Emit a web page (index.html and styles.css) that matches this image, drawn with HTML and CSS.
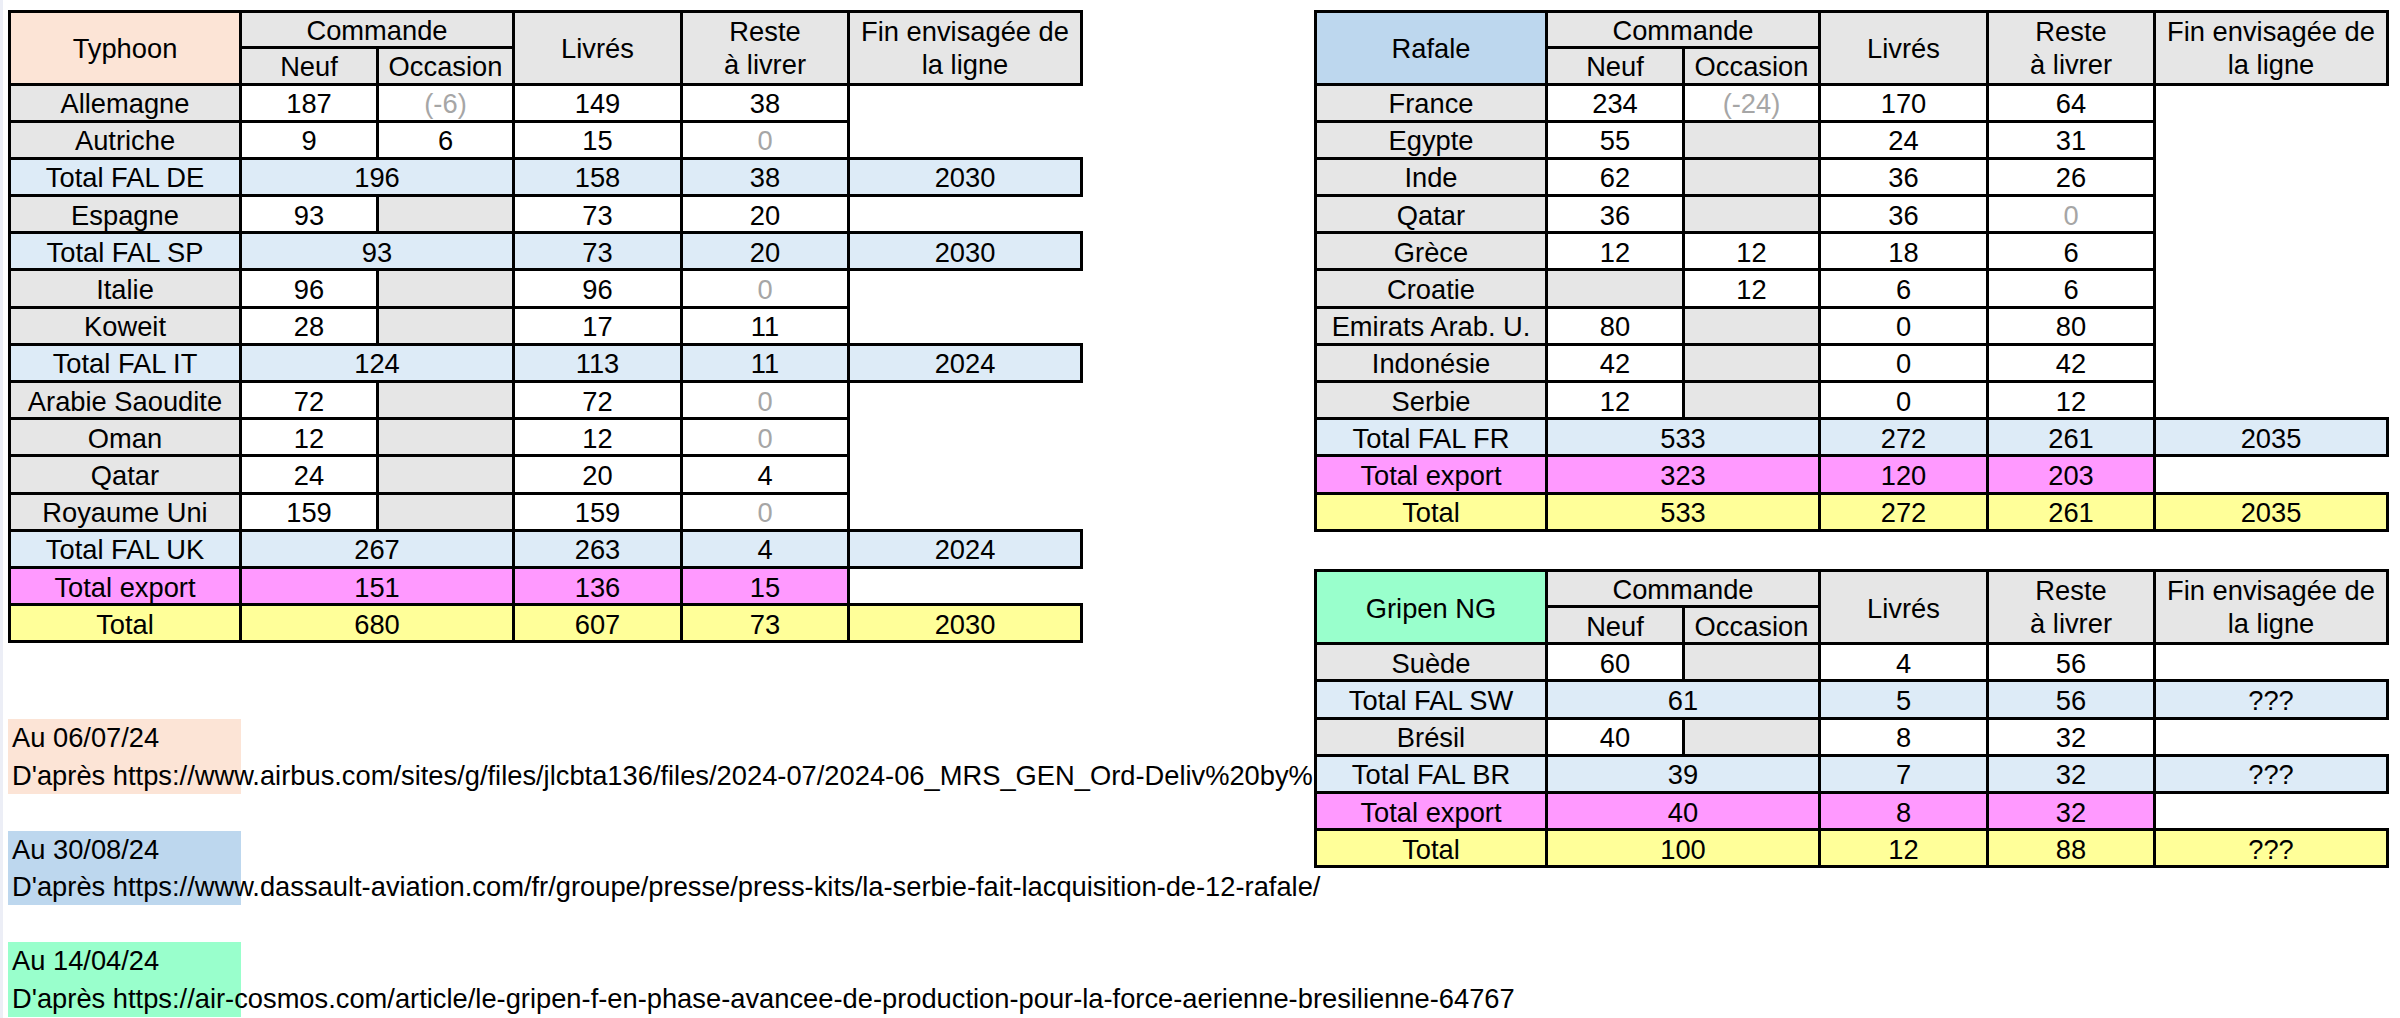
FILE: index.html
```html
<!DOCTYPE html>
<html lang="fr">
<head>
<meta charset="utf-8">
<title>Typhoon, Rafale, Gripen NG – commandes et livraisons</title>
<link rel="stylesheet" href="styles.css">
</head>
<body>
<main class="sheet">
  <section class="col-left">
    <table class="grid">
      <colgroup><col class="c-name"><col class="c-neuf"><col class="c-occ"><col class="c-liv"><col class="c-reste"><col class="c-fin"></colgroup>
      <thead>
        <tr class="h1">
          <th rowspan="2" class="plane typhoon">Typhoon</th>
          <th colspan="2" class="hd">Commande</th>
          <th rowspan="2" class="hd">Livrés</th>
          <th rowspan="2" class="hd two">Reste<br>à livrer</th>
          <th rowspan="2" class="hd two">Fin envisagée de<br>la ligne</th>
        </tr>
        <tr class="h2"><th class="hd">Neuf</th><th class="hd">Occasion</th></tr>
      </thead>
      <tbody>
        <tr><th class="name">Allemagne</th><td>187</td><td class="dim">(-6)</td><td>149</td><td>38</td><td class="blank"></td></tr>
        <tr><th class="name">Autriche</th><td>9</td><td>6</td><td>15</td><td class="dim">0</td><td class="blank"></td></tr>
        <tr class="fal"><th>Total FAL DE</th><td colspan="2">196</td><td>158</td><td>38</td><td>2030</td></tr>
        <tr><th class="name">Espagne</th><td>93</td><td class="na"></td><td>73</td><td>20</td><td class="blank"></td></tr>
        <tr class="fal"><th>Total FAL SP</th><td colspan="2">93</td><td>73</td><td>20</td><td>2030</td></tr>
        <tr><th class="name">Italie</th><td>96</td><td class="na"></td><td>96</td><td class="dim">0</td><td class="blank"></td></tr>
        <tr><th class="name">Koweit</th><td>28</td><td class="na"></td><td>17</td><td>11</td><td class="blank"></td></tr>
        <tr class="fal"><th>Total FAL IT</th><td colspan="2">124</td><td>113</td><td>11</td><td>2024</td></tr>
        <tr><th class="name">Arabie Saoudite</th><td>72</td><td class="na"></td><td>72</td><td class="dim">0</td><td class="blank"></td></tr>
        <tr><th class="name">Oman</th><td>12</td><td class="na"></td><td>12</td><td class="dim">0</td><td class="blank"></td></tr>
        <tr><th class="name">Qatar</th><td>24</td><td class="na"></td><td>20</td><td>4</td><td class="blank"></td></tr>
        <tr><th class="name">Royaume Uni</th><td>159</td><td class="na"></td><td>159</td><td class="dim">0</td><td class="blank"></td></tr>
        <tr class="fal"><th>Total FAL UK</th><td colspan="2">267</td><td>263</td><td>4</td><td>2024</td></tr>
        <tr class="export"><th>Total export</th><td colspan="2">151</td><td>136</td><td>15</td><td class="blank"></td></tr>
        <tr class="total"><th>Total</th><td colspan="2">680</td><td>607</td><td>73</td><td>2030</td></tr>
      </tbody>
    </table>

    <div class="notes">
      <p class="note peach"><span class="line">Au 06/07/24</span><span class="line">D'après https://www.airbus.com/sites/g/files/jlcbta136/files/2024-07/2024-06_MRS_GEN_Ord-Deliv%20by%20</span></p>
      <p class="note blue"><span class="line">Au 30/08/24</span><span class="line">D'après https://www.dassault-aviation.com/fr/groupe/presse/press-kits/la-serbie-fait-lacquisition-de-12-rafale/</span></p>
      <p class="note mint"><span class="line">Au 14/04/24</span><span class="line">D'après https://air-cosmos.com/article/le-gripen-f-en-phase-avancee-de-production-pour-la-force-aerienne-bresilienne-64767</span></p>
    </div>
  </section>

  <section class="col-right">
    <table class="grid">
      <colgroup><col class="c-name"><col class="c-neuf"><col class="c-occ"><col class="c-liv"><col class="c-reste"><col class="c-fin"></colgroup>
      <thead>
        <tr class="h1">
          <th rowspan="2" class="plane rafale">Rafale</th>
          <th colspan="2" class="hd">Commande</th>
          <th rowspan="2" class="hd">Livrés</th>
          <th rowspan="2" class="hd two">Reste<br>à livrer</th>
          <th rowspan="2" class="hd two">Fin envisagée de<br>la ligne</th>
        </tr>
        <tr class="h2"><th class="hd">Neuf</th><th class="hd">Occasion</th></tr>
      </thead>
      <tbody>
        <tr><th class="name">France</th><td>234</td><td class="dim">(-24)</td><td>170</td><td>64</td><td class="blank"></td></tr>
        <tr><th class="name">Egypte</th><td>55</td><td class="na"></td><td>24</td><td>31</td><td class="blank"></td></tr>
        <tr><th class="name">Inde</th><td>62</td><td class="na"></td><td>36</td><td>26</td><td class="blank"></td></tr>
        <tr><th class="name">Qatar</th><td>36</td><td class="na"></td><td>36</td><td class="dim">0</td><td class="blank"></td></tr>
        <tr><th class="name">Grèce</th><td>12</td><td>12</td><td>18</td><td>6</td><td class="blank"></td></tr>
        <tr><th class="name">Croatie</th><td class="na"></td><td>12</td><td>6</td><td>6</td><td class="blank"></td></tr>
        <tr><th class="name">Emirats Arab. U.</th><td>80</td><td class="na"></td><td>0</td><td>80</td><td class="blank"></td></tr>
        <tr><th class="name">Indonésie</th><td>42</td><td class="na"></td><td>0</td><td>42</td><td class="blank"></td></tr>
        <tr><th class="name">Serbie</th><td>12</td><td class="na"></td><td>0</td><td>12</td><td class="blank"></td></tr>
        <tr class="fal"><th>Total FAL FR</th><td colspan="2">533</td><td>272</td><td>261</td><td>2035</td></tr>
        <tr class="export"><th>Total export</th><td colspan="2">323</td><td>120</td><td>203</td><td class="blank"></td></tr>
        <tr class="total"><th>Total</th><td colspan="2">533</td><td>272</td><td>261</td><td>2035</td></tr>
      </tbody>
    </table>

    <table class="grid gripen-table">
      <colgroup><col class="c-name"><col class="c-neuf"><col class="c-occ"><col class="c-liv"><col class="c-reste"><col class="c-fin"></colgroup>
      <thead>
        <tr class="h1">
          <th rowspan="2" class="plane gripen">Gripen NG</th>
          <th colspan="2" class="hd">Commande</th>
          <th rowspan="2" class="hd">Livrés</th>
          <th rowspan="2" class="hd two">Reste<br>à livrer</th>
          <th rowspan="2" class="hd two">Fin envisagée de<br>la ligne</th>
        </tr>
        <tr class="h2"><th class="hd">Neuf</th><th class="hd">Occasion</th></tr>
      </thead>
      <tbody>
        <tr><th class="name">Suède</th><td>60</td><td class="na"></td><td>4</td><td>56</td><td class="blank"></td></tr>
        <tr class="fal"><th>Total FAL SW</th><td colspan="2">61</td><td>5</td><td>56</td><td>???</td></tr>
        <tr><th class="name">Brésil</th><td>40</td><td class="na"></td><td>8</td><td>32</td><td class="blank"></td></tr>
        <tr class="fal"><th>Total FAL BR</th><td colspan="2">39</td><td>7</td><td>32</td><td>???</td></tr>
        <tr class="export"><th>Total export</th><td colspan="2">40</td><td>8</td><td>32</td><td class="blank"></td></tr>
        <tr class="total"><th>Total</th><td colspan="2">100</td><td>12</td><td>88</td><td>???</td></tr>
      </tbody>
    </table>
  </section>
</main>
</body>
</html>
```

FILE: styles.css
```css
html, body {
  margin: 0;
  padding: 0;
  background: #ffffff;
}

body {
  font-family: "Liberation Sans", Arial, sans-serif;
  font-size: 27.3px;
  color: #000000;
  box-shadow: inset 3px 0 0 #eceef6;
  min-height: 1018px;
  overflow: hidden;
}

.sheet {
  display: grid;
  grid-template-columns: 1306px 1086px;
  align-items: start;
  padding: 9.5px 0 0 8px;
}

.col-left {
  display: flex;
  flex-direction: column;
  min-width: 0;
}

/* the right-hand tables sit over the overflowing note text, as in a spreadsheet */
.col-right {
  display: flex;
  flex-direction: column;
  gap: 37.5px;
  position: relative;
  z-index: 1;
}

/* ---------- tables ---------- */
.grid {
  border-collapse: collapse;
  table-layout: fixed;
  width: 1072px;
  background: #ffffff;
}

.c-name { width: 231px; }
.c-neuf { width: 137px; }
.c-occ { width: 136px; }
.c-liv { width: 168px; }
.c-reste { width: 167px; }
.c-fin { width: 233px; }

.grid th,
.grid td {
  border: 3px solid #000000;
  padding: 2px 2px 0;
  text-align: center;
  vertical-align: middle;
  font-weight: normal;
  line-height: 31px;
  white-space: nowrap;
}

.grid .h1 { height: 36px; }
.grid .h2 { height: 37px; }
.grid tbody tr { height: 37.2px; }

.hd { background: #e6e6e6; }
.hd.two { line-height: 33px; padding-top: 0; }

.plane { padding-top: 0; }
.typhoon { background: #fce4d6; }
.rafale { background: #bdd7ee; }
.gripen { background: #99ffcc; }

.name { background: #e6e6e6; }
.na { background: #e6e6e6; }
.dim { color: #a6a6a6; }

.fal { background: #ddebf7; }
.export { background: #ff99ff; }
.total { background: #ffff99; }

.grid .blank {
  background: #ffffff;
  border-top-style: none;
  border-right-style: none;
  border-bottom-style: none;
}

/* ---------- notes ---------- */
.notes {
  display: flex;
  flex-direction: column;
  gap: 37.2px;
  margin-top: 76px;
}

.note {
  margin: 0;
  display: flex;
  flex-direction: column;
  background-image: linear-gradient(var(--fill), var(--fill));
  background-repeat: no-repeat;
  background-size: 233px 100%;
}

.note .line {
  display: block;
  height: 37.2px;
  line-height: 37.2px;
  padding-left: 4px;
  white-space: nowrap;
}

.peach { --fill: #fce4d6; }
.blue { --fill: #bdd7ee; }
.mint { --fill: #99ffcc; }
```
